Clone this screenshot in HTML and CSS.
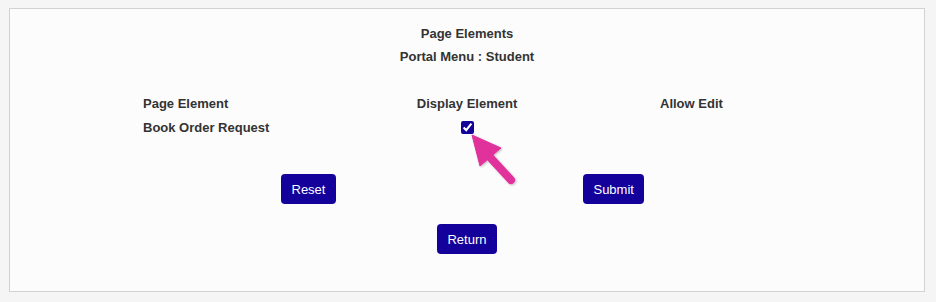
FILE: index.html
```html
<!DOCTYPE html>
<html>
<head>
<meta charset="utf-8">
<link rel="stylesheet" href="styles.css">
</head>
<body>
<div class="panel">
  <div class="titles">
    <div>Page Elements</div>
    <div>Portal Menu : Student</div>
  </div>
  <div class="table">
    <div class="cell">Page Element</div>
    <div class="cell"><span class="mid">Display Element</span></div>
    <div class="cell">Allow Edit</div>
    <div class="cell">Book Order Request</div>
    <div class="cell"><span class="mid"><input type="checkbox" class="chk" checked></span></div>
    <div class="cell"></div>
  </div>
  <div class="btnrow">
    <button class="btn">Reset</button>
    <button class="btn">Submit</button>
  </div>
  <div class="btnrow center">
    <button class="btn">Return</button>
  </div>
  <svg class="arrow" width="65" height="65" viewBox="0 0 65 65">
    <defs>
      <filter id="sh" x="-20%" y="-20%" width="140%" height="140%">
        <feDropShadow dx="1" dy="1" stdDeviation="1.2" flood-color="#000" flood-opacity="0.25"/>
      </filter>
    </defs>
    <g filter="url(#sh)" fill="#e0309a" stroke="#e0309a">
      <polygon points="12,10 41,23 20,41" stroke-width="1" stroke-linejoin="round"/>
      <line x1="27" y1="29" x2="51" y2="55" stroke-width="8" stroke-linecap="round"/>
    </g>
  </svg>
</div>
</body>
</html>
```
FILE: styles.css
```css
html, body {
  margin: 0;
  padding: 0;
  background: #f5f5f5;
}
body {
  font-family: "Liberation Sans", Arial, sans-serif;
  font-size: 13px;
  color: #333;
}
.panel {
  position: relative;
  box-sizing: border-box;
  margin: 8px 11px 0 9px;
  height: 284px;
  border: 1px solid #d2d2d2;
  background: #fcfcfc;
  padding-top: 13px;
}
.titles {
  text-align: center;
  font-weight: bold;
  line-height: 23px;
}
.table {
  margin-top: 23px;
  margin-left: 133px;
  display: grid;
  grid-template-columns: 276px 241px 1fr;
  font-weight: bold;
  white-space: nowrap;
}
.cell {
  height: 24px;
  display: flex;
  align-items: center;
}
.mid {
  width: 96px;
  display: flex;
  justify-content: center;
  align-items: center;
  white-space: nowrap;
}
.chk {
  margin: 0;
  width: 13px;
  height: 13px;
  accent-color: #14009a;
}
.btnrow {
  display: flex;
  padding-left: 271px;
  gap: 247px;
  margin-top: 35px;
}
.btnrow.center {
  padding-left: 0;
  justify-content: center;
  margin-top: 20px;
}
.btn {
  height: 30px;
  padding: 0 10.5px;
  border: none;
  border-radius: 4px;
  background: #14009a;
  color: #fff;
  font-family: "Liberation Sans", Arial, sans-serif;
  font-size: 13px;
}
.arrow {
  position: absolute;
  left: 450px;
  top: 116px;
}
```
